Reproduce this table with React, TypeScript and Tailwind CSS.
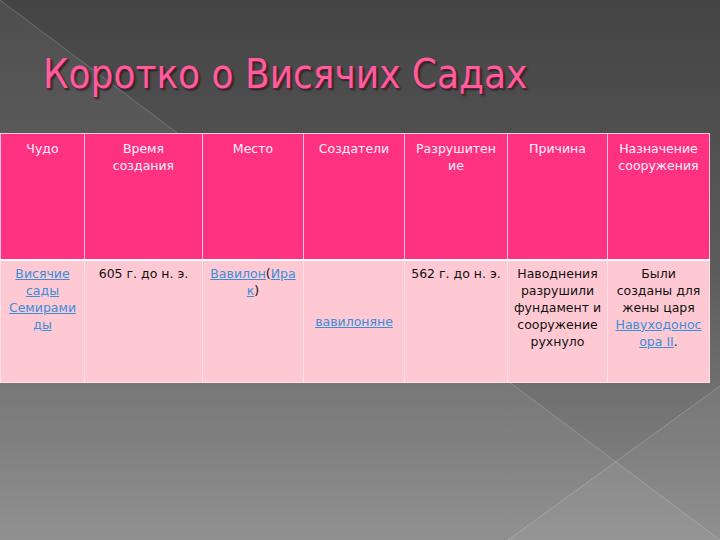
import React from "react"

const link = "text-[#3b8fd8] underline decoration-[#3b8fd8]"

function Backdrop() {
  return (
    <svg className="absolute inset-0" width="720" height="540" viewBox="0 0 720 540">
      <polygon points="0,0 720,540 0,540" fill="rgba(255,255,255,0.06)" />
      <polygon points="720,386 720,540 508,540" fill="rgba(255,255,255,0.05)" />
      <line x1="0" y1="0" x2="720" y2="540" stroke="rgba(255,255,255,0.2)" strokeWidth="1" />
      <line x1="720" y1="386" x2="508" y2="540" stroke="rgba(255,255,255,0.2)" strokeWidth="1" />
    </svg>
  )
}

export default function App() {
  const head = [
    <>Чудо</>,
    <>Время<br />создания</>,
    <>Место</>,
    <>Создатели</>,
    <>Разрушитен<br />ие</>,
    <>Причина</>,
    <>Назначение<br />сооружения</>,
  ]

  const cell = "align-top text-center pt-[4px] px-1 bg-[#ffc9d4] border border-[#fbe0e7] whitespace-nowrap"

  return (
    <div className="relative w-[720px] h-[540px] overflow-hidden bg-linear-to-b from-[#444444] via-[#5c5c5c] to-[#8a8a8a]">
      <Backdrop />
      <div className="relative flex flex-col">
        <div className="h-[133px] pt-[54px] pl-[43px]">
          <h1
            className="text-[40px] leading-[40px] text-[#ff5c9c] whitespace-nowrap"
            style={{
              fontFamily: '"DejaVu Sans Condensed", "DejaVu Sans", sans-serif',
              fontStretch: "condensed",
              textShadow: "1px 1px 0 #6a1c3a, 2px 2px 2px #1e1e1e",
            }}
          >
            Коротко о Висячих Садах
          </h1>
        </div>

        <table
          className="table-fixed border-collapse w-[709px] text-[12.5px] leading-[17px]"
          style={{ fontFamily: '"DejaVu Sans", sans-serif' }}
        >
          <colgroup>
            <col className="w-[84px]" />
            <col className="w-[118px]" />
            <col className="w-[101px]" />
            <col className="w-[101px]" />
            <col className="w-[103px]" />
            <col className="w-[100px]" />
            <col className="w-[102px]" />
          </colgroup>
          <tbody>
            <tr className="h-[126px]">
              {head.map((h, i) => (
                <td
                  key={i}
                  className="align-top text-center pt-[6px] px-1 bg-[#ff3282] text-[#fff1f6] border border-[#f9c9da] border-b-2 border-b-white whitespace-nowrap"
                >
                  {h}
                </td>
              ))}
            </tr>
            <tr className="h-[123px] text-[#111111]">
              <td className={cell}>
                <span className={link}>Висячие</span>
                <br />
                <span className={link}>сады</span>
                <br />
                <span className={link}>Семирами</span>
                <br />
                <span className={link}>ды</span>
              </td>
              <td className={cell}>605 г. до н. э.</td>
              <td className={cell}>
                <span className={link}>Вавилон</span>(<span className={link}>Ира</span>
                <br />
                <span className={link}>к</span>)
              </td>
              <td className="align-middle text-center px-1 bg-[#ffc9d4] border border-[#fbe0e7] whitespace-nowrap">
                <span className={link}>вавилоняне</span>
              </td>
              <td className={cell}>562 г. до н. э.</td>
              <td className={cell}>
                Наводнения
                <br />
                разрушили
                <br />
                фундамент и
                <br />
                сооружение
                <br />
                рухнуло
              </td>
              <td className={cell}>
                Были
                <br />
                созданы для
                <br />
                жены царя
                <br />
                <span className={link}>Навуходонос</span>
                <br />
                <span className={link}>ора II</span>.
              </td>
            </tr>
          </tbody>
        </table>
      </div>
    </div>
  )
}
